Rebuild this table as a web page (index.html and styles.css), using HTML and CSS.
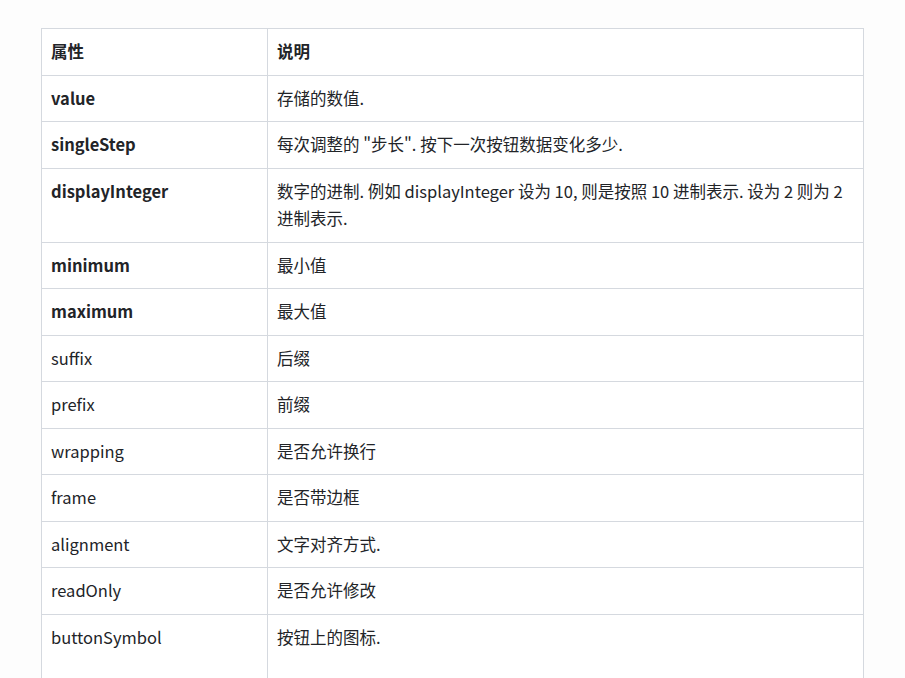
FILE: index.html
```html
<!DOCTYPE html>
<html lang="zh">
<head>
<meta charset="utf-8">
<link rel="stylesheet" href="styles.css">
</head>
<body>
<div class="page">
<table class="props">
  <thead>
    <tr><th class="c1">属性</th><th>说明</th></tr>
  </thead>
  <tbody>
    <tr><td class="b">value</td><td>存储的数值.</td></tr>
    <tr><td class="b">singleStep</td><td>每次调整的 "步长". 按下一次按钮数据变化多少.</td></tr>
    <tr><td class="b">displayInteger</td><td>数字的进制. 例如 displayInteger 设为 10, 则是按照 10 进制表示. 设为 2 则为 2 进制表示.</td></tr>
    <tr><td class="b">minimum</td><td>最小值</td></tr>
    <tr><td class="b">maximum</td><td>最大值</td></tr>
    <tr><td>suffix</td><td>后缀</td></tr>
    <tr><td>prefix</td><td>前缀</td></tr>
    <tr><td>wrapping</td><td>是否允许换行</td></tr>
    <tr><td>frame</td><td>是否带边框</td></tr>
    <tr><td>alignment</td><td>文字对齐方式.</td></tr>
    <tr><td>readOnly</td><td>是否允许修改</td></tr>
    <tr class="last"><td>buttonSymbol</td><td>按钮上的图标.</td></tr>
  </tbody>
</table>
</div>
</body>
</html>
```

FILE: styles.css
```css
html, body {
  margin: 0;
  background: #fdfdfd;
  overflow: hidden;
}
.page {
  padding: 28px 0 0 41px;
  height: 650px;
  overflow: hidden;
}
.props {
  border-collapse: collapse;
  width: 823px;
  font-family: "Noto Sans CJK SC", "Noto Sans", sans-serif;
  font-size: 16.5px;
  line-height: 27.5px;
  color: #222428;
  background: #fff;
}
.props th, .props td {
  border: 1px solid #d5d9df;
  padding: 9px 10px 9px 9px;
  text-align: left;
  vertical-align: top;
}
.props th {
  font-weight: 700;
}
.props .c1 {
  width: 206px;
}
.props td.b {
  font-weight: 700;
}
.props tr.last td {
  height: 80px;
}
```
